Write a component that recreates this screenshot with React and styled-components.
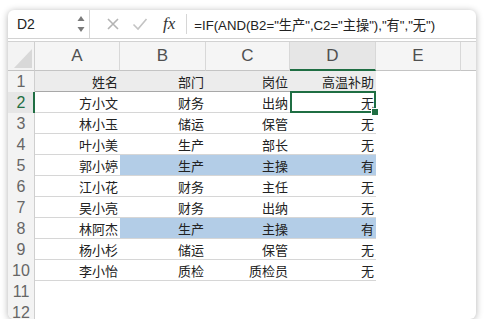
import React from "react";
import styled, { createGlobalStyle, css } from "styled-components";

const GREEN = "#1f6e43";

const rows = [
  ["姓名", "部门", "岗位", "高温补助"],
  ["方小文", "财务", "出纳", "无"],
  ["林小玉", "储运", "保管", "无"],
  ["叶小美", "生产", "部长", "无"],
  ["郭小婷", "生产", "主操", "有"],
  ["江小花", "财务", "主任", "无"],
  ["吴小亮", "财务", "出纳", "无"],
  ["林阿杰", "生产", "主操", "有"],
  ["杨小杉", "储运", "保管", "无"],
  ["李小怡", "质检", "质检员", "无"],
  [],
  [],
];

const columns = ["A", "B", "C", "D", "E"];

const App = () => {
  return (
    <>
      <GlobalStyle />
      <Frame>
        <FormulaBar>
          <NameBox>
            D2
            <Spinner>
              <svg width="8" height="18" viewBox="0 0 8 18">
                <path d="M4 1 L7.5 6 L0.5 6 Z" fill="#7a7a7a" />
                <path d="M4 17 L7.5 12 L0.5 12 Z" fill="#7a7a7a" />
              </svg>
            </Spinner>
          </NameBox>
          <Tools>
            <svg width="14" height="14" viewBox="0 0 14 14">
              <path
                d="M2 2 L12 12 M12 2 L2 12"
                stroke="#b4b4b4"
                strokeWidth="1.6"
                fill="none"
              />
            </svg>
            <svg width="16" height="14" viewBox="0 0 16 14">
              <path
                d="M1.5 7.5 L6 12 L14.5 2"
                stroke="#c4c4c4"
                strokeWidth="1.6"
                fill="none"
              />
            </svg>
            <Fx>fx</Fx>
          </Tools>
          <Formula>=IF(AND(B2="生产",C2="主操"),"有","无")</Formula>
        </FormulaBar>

        <Sheet>
          <Corner>
            <svg width="20" height="21" viewBox="0 0 20 21">
              <path d="M19 1 L19 20 L1 20 Z" fill="#d8d8d8" />
            </svg>
          </Corner>
          {columns.map((c) => (
            <ColHead key={c} $active={c === "D"}>
              {c}
            </ColHead>
          ))}
          <ColHead $filler />

          {rows.map((r, i) => {
            const rowNo = i + 1;
            const inTable = rowNo <= 10;
            const hot = r[3] === "有";
            return (
              <React.Fragment key={rowNo}>
                <RowHead $active={rowNo === 2}>{rowNo}</RowHead>
                {[0, 1, 2, 3].map((ci) => (
                  <Cell
                    key={ci}
                    $table={inTable}
                    $title={rowNo === 1}
                    $hot={hot && ci > 0}
                    $selected={rowNo === 2 && ci === 3}
                  >
                    {r[ci]}
                  </Cell>
                ))}
                <Cell />
                <Cell />
              </React.Fragment>
            );
          })}
        </Sheet>
      </Frame>
    </>
  );
};

export default App;

const GlobalStyle = createGlobalStyle`
  body {
    margin: 0;
    background: #ffffff;
    font-family: "Liberation Sans", "Noto Sans CJK SC", sans-serif;
  }
`;

const Frame = styled.div`
  margin: 10px 0 0 8px;
  width: 468px;
  height: 309px;
  background: #ffffff;
  border-radius: 6px;
  box-shadow: 0 1px 7px rgba(0, 0, 0, 0.3);
  overflow: hidden;
`;

const FormulaBar = styled.div`
  display: flex;
  align-items: center;
  height: 28px;
  border-bottom: 1px solid #d2d2d2;
  margin-bottom: 2px;
`;

const NameBox = styled.div`
  display: flex;
  align-items: center;
  justify-content: space-between;
  width: 82px;
  height: 100%;
  box-sizing: border-box;
  padding: 0 4px 0 9px;
  border-right: 1px solid #d6d6d6;
  font-size: 14px;
  color: #222;
`;

const Spinner = styled.span`
  display: flex;
  align-items: center;
`;

const Tools = styled.div`
  display: flex;
  align-items: center;
  gap: 12px;
  height: 20px;
  padding: 0 11px 0 16px;
  border-right: 1px solid #d6d6d6;
`;

const Fx = styled.span`
  font-family: "Liberation Serif", serif;
  font-style: italic;
  font-size: 17px;
  color: #333;
  margin-left: 3px;
`;

const Formula = styled.div`
  padding-left: 7px;
  font-size: 13.2px;
  color: #222;
  white-space: nowrap;
`;

const Sheet = styled.div`
  display: grid;
  grid-template-columns: 27px 85px 86px 84px 86px 85px 1fr;
  grid-template-rows: 29px;
  grid-auto-rows: 21px;
  border-top: 1px solid #d2d2d2;
`;

const Corner = styled.div`
  display: flex;
  align-items: flex-end;
  justify-content: flex-end;
  padding: 0 1px 1px 0;
  background: #f3f3f3;
  border-right: 1px solid #cfcfcf;
  border-bottom: 1px solid #c4c4c4;
`;

const ColHead = styled.div`
  display: flex;
  align-items: center;
  justify-content: center;
  background: ${(p) => (p.$active ? "#e6e6e6" : "#f5f5f5")};
  border-right: ${(p) => (p.$filler ? "none" : "1px solid #d8d8d8")};
  border-bottom: ${(p) =>
    p.$active ? `2px solid ${GREEN}` : "1px solid #c4c4c4"};
  box-sizing: border-box;
  font-size: 17px;
  color: #505050;
  padding-top: ${(p) => (p.$active ? "1px" : "0")};
`;

const RowHead = styled.div`
  display: flex;
  align-items: center;
  justify-content: center;
  background: ${(p) => (p.$active ? "#e6e6e6" : "#f3f3f3")};
  border-right: ${(p) =>
    p.$active ? `2px solid ${GREEN}` : "1px solid #cfcfcf"};
  box-sizing: border-box;
  font-size: 16px;
  color: ${(p) => (p.$active ? GREEN : "#666")};
  padding-left: ${(p) => (p.$active ? "1px" : "0")};
`;

const Cell = styled.div`
  display: flex;
  align-items: center;
  justify-content: flex-end;
  padding-right: 2px;
  box-sizing: border-box;
  font-family: "Noto Sans CJK SC", sans-serif;
  font-size: 13px;
  color: #222;
  white-space: nowrap;
  ${(p) =>
    p.$table &&
    css`
      border-bottom: 1px solid ${p.$title ? "#a8a8a8" : "#d6d6d6"};
    `}
  ${(p) =>
    p.$title &&
    css`
      background: #ececec;
    `}
  ${(p) =>
    p.$hot &&
    css`
      background: #b3cde7;
    `}
  ${(p) =>
    p.$selected &&
    css`
      position: relative;
      &::after {
        content: "";
        position: absolute;
        left: 0;
        right: 0;
        top: -1px;
        bottom: -1px;
        border: 2px solid ${GREEN};
      }
      &::before {
        content: "";
        position: absolute;
        right: -3px;
        bottom: -4px;
        width: 6px;
        height: 6px;
        background: ${GREEN};
        border: 1px solid #fff;
        z-index: 1;
      }
    `}
`;
